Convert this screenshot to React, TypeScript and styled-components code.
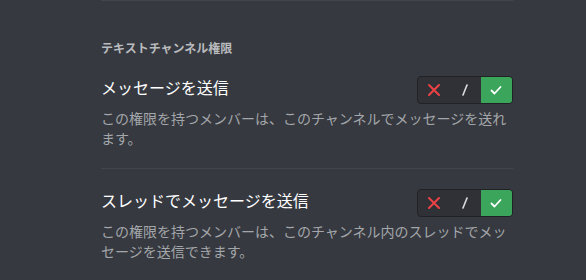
import React from "react";
import styled, { createGlobalStyle } from "styled-components";

const GlobalStyle = createGlobalStyle`
  html, body {
    margin: 0;
    padding: 0;
    background: #36393f;
  }
  body {
    font-family: "Noto Sans CJK JP", "Noto Sans", sans-serif;
  }
`;

type Perm = { title: string; desc: string };

const perms: Perm[] = [
  {
    title: "メッセージを送信",
    desc: "この権限を持つメンバーは、このチャンネルでメッセージを送れます。",
  },
  {
    title: "スレッドでメッセージを送信",
    desc: "この権限を持つメンバーは、このチャンネル内のスレッドでメッセージを送信できます。",
  },
];

const Page = styled.div`
  width: 586px;
  height: 280px;
  overflow: hidden;
  background: #36393f;
  padding-left: 101px;
  box-sizing: border-box;
`;

const Content = styled.div`
  width: 412px;
  border-top: 1px solid #42454b;
`;

const Header = styled.h2`
  margin: 39px 0 0 0;
  font-size: 12px;
  line-height: 16px;
  font-weight: 700;
  color: #b9bbbe;
`;

const Row = styled.div<{ $divided?: boolean }>`
  padding: 20px 0;
  border-bottom: ${(p) => (p.$divided ? "1px solid #42454b" : "none")};
`;

const TitleLine = styled.div`
  display: flex;
  align-items: flex-start;
  justify-content: space-between;
  height: 28px;
`;

const Title = styled.div`
  font-size: 16px;
  line-height: 22px;
  font-weight: 400;
  color: #ffffff;
`;

const Desc = styled.div`
  margin-top: 4px;
  font-size: 14px;
  line-height: 20px;
  color: #a3a6aa;
`;

const Toggle = styled.div`
  display: flex;
  width: 96px;
  height: 28px;
  box-sizing: border-box;
  border: 1px solid #202225;
  border-radius: 4px;
  background: #2f3136;
  overflow: hidden;
`;

const Seg = styled.div<{ $active?: boolean }>`
  flex: 1;
  display: flex;
  align-items: center;
  justify-content: center;
  background: ${(p) => (p.$active ? "#3ba55c" : "transparent")};
`;

const Deny = () => (
  <svg width="14" height="14" viewBox="0 0 14 14">
    <path d="M2 2L12 12M12 2L2 12" stroke="#ed4245" strokeWidth="2" strokeLinecap="round" />
  </svg>
);

const Neutral = () => (
  <svg width="14" height="14" viewBox="0 0 14 14">
    <path d="M9 2L5 12" stroke="#dcddde" strokeWidth="1.6" strokeLinecap="round" />
  </svg>
);

const Allow = () => (
  <svg width="14" height="14" viewBox="0 0 14 14">
    <path d="M2.5 7.5L5.5 10.5L11.5 4" stroke="#ffffff" strokeWidth="1.8" fill="none" strokeLinecap="round" strokeLinejoin="round" />
  </svg>
);

const App = () => (
  <Page>
    <GlobalStyle />
    <Content>
      <Header>テキストチャンネル権限</Header>
      {perms.map((p, i) => (
        <Row key={p.title} $divided={i < perms.length - 1}>
          <TitleLine>
            <Title>{p.title}</Title>
            <Toggle>
              <Seg><Deny /></Seg>
              <Seg><Neutral /></Seg>
              <Seg $active><Allow /></Seg>
            </Toggle>
          </TitleLine>
          <Desc>{p.desc}</Desc>
        </Row>
      ))}
    </Content>
  </Page>
);

export default App;
